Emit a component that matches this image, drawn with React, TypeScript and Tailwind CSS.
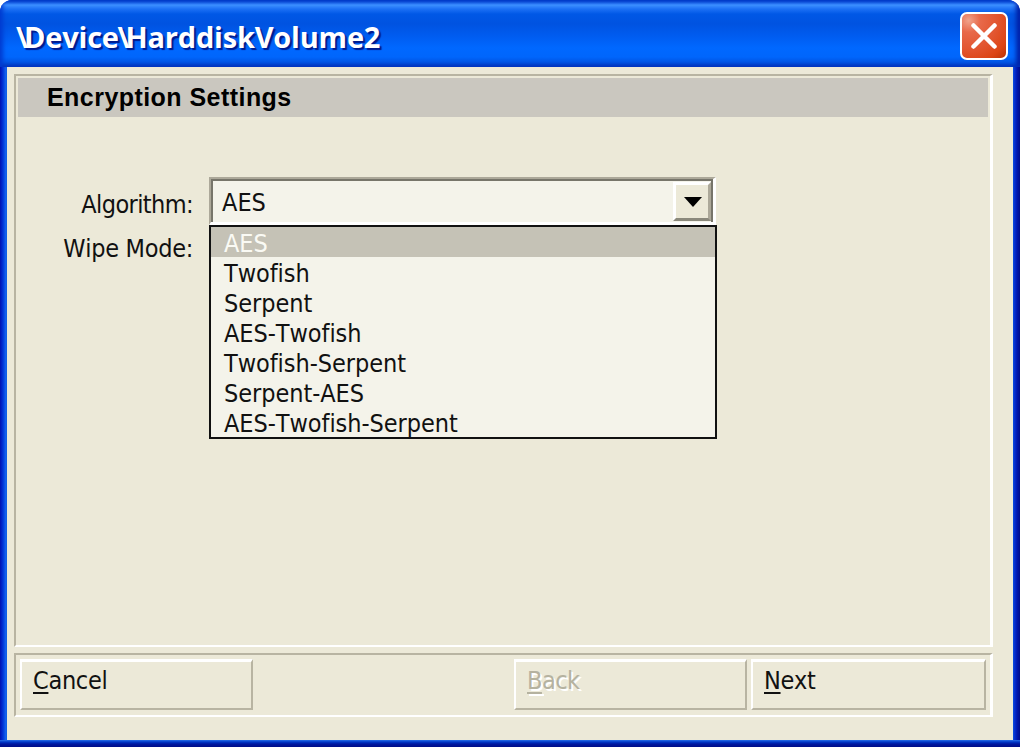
const options = ["AES", "Twofish", "Serpent", "AES-Twofish", "Twofish-Serpent", "Serpent-AES", "AES-Twofish-Serpent"];

function WizardButton({ label, className, disabled }: { label: string; className: string; disabled?: boolean }) {
  return (
    <button
      disabled={disabled}
      className={`h-[51px] border-2 border-t-[3px] border-t-white border-l-white border-r-[#b8b4a2] border-b-[#b8b4a2] pl-[11px] pb-[8px] text-left leading-[30px] ${
        disabled ? "text-[#b5b2a0] tracking-[-0.5px] [text-shadow:2px_2px_0_#fff]" : "text-[#111] tracking-[-0.3px]"
      } ${className}`}
    >
      <span className="underline decoration-2 underline-offset-[3px]">{label[0]}</span>
      {label.slice(1)}
    </button>
  );
}

function ComboBox() {
  return (
    <div className="relative h-[48px] w-[507px] border-t-2 border-l-2 border-r-[3px] border-b-[3px] border-t-[#aca899] border-l-[#aca899] border-r-white border-b-white">
      <div className="flex h-full border-t-2 border-l-2 border-r-2 border-[#77756a] bg-[#f4f3ea]">
        <span className="flex-1 pl-[9px] pt-[4px] leading-[36px]">AES</span>
        <div className="mt-[1px] flex h-[39px] w-[38px] items-center justify-center border-t-[3px] border-l-[3px] border-r-[3px] border-b-[3px] border-t-white border-l-white border-r-[#aca899] border-b-[#8b897c] bg-[#ece9d8]">
          <svg className="mt-[1px] ml-[1px] h-[10px] w-[18px]" viewBox="0 0 18 10">
            <path d="M0 0H18L9 10Z" fill="#000" />
          </svg>
        </div>
      </div>
      <ul className="absolute top-[46px] left-[-2px] z-10 h-[214px] w-[508px] border-2 border-[#111] bg-[#f4f3ea] leading-[34px] tracking-[-0.05px]">
        {options.map((o, i) => (
          <li key={o} className={`h-[30px] pl-[13px] ${i === 0 ? "bg-[#c5c2b6] text-[#fafaf4]" : ""}`}>
            {o}
          </li>
        ))}
      </ul>
    </div>
  );
}

export default function App() {
  return (
    <div className="h-[747px] w-[1020px] overflow-hidden bg-white font-['DejaVu_Sans_Condensed','DejaVu_Sans',sans-serif] text-[25px] text-[#111] [font-kerning:none] [font-stretch:condensed] [font-variant-ligatures:none]">
      <div className="flex h-full flex-col overflow-hidden rounded-t-[12px] bg-[linear-gradient(to_right,#0010b0_0px,#0035d8_3px,#1667f0_6px,#0855dd_7px,#0855dd_1013px,#0838d8_1014px,#0018b0_1017px,#000c88_1020px)]">
        <header className="flex h-[67px] shrink-0 items-center justify-between bg-[linear-gradient(to_bottom,#0050d8_0px,#1560e8_2px,#3c90ff_5px,#1c70f5_9px,#0058e6_14px,#0053e1_24px,#005cf0_36px,#0068ff_48px,#0066fc_57px,#0055e5_62px,#003cc0_67px)] pr-[12px] pl-[16px] shadow-[inset_3px_0_4px_#003bd0,inset_-4px_0_4px_#0022a8]">
          <h1 className="pt-[7px] font-['Open_Sans','Noto_Sans',sans-serif] text-[29px] leading-[40px] font-bold tracking-[-0.2px] text-white [font-stretch:normal] [text-shadow:2px_2px_1px_#001a8c]">
            <span className="tracking-[-4px]">\</span>Devic<span className="tracking-[-1.5px]">e</span>
            <span className="tracking-[-4px]">\</span>HarddiskVolume2
          </h1>
          <button
            aria-label="Close"
            className="mt-[4px] flex h-[48px] w-[48px] items-center justify-center rounded-[7px] border-2 border-white bg-[radial-gradient(circle_at_15%_15%,#f0a38c_0%,#e8694a_22%,#e2552f_55%,#dc4515_80%,#b83408_100%)]"
          >
            <svg className="h-[26px] w-[26px]" viewBox="0 0 26 26">
              <path d="M2.5 2.5L23.5 23.5M23.5 2.5L2.5 23.5" stroke="#fff" strokeWidth="4.5" strokeLinecap="round" />
            </svg>
          </button>
        </header>
        <main className="mx-[7px] mb-[7px] flex flex-1 flex-col bg-[#ece9d8] pt-[7px] pl-[7px]">
          <section className="h-[573px] w-[979px] border-2 border-r-[3px] border-t-[#b8b4a2] border-l-[#b8b4a2] border-r-white border-b-white px-[2px] pt-[2px]">
            <h2 className="h-[39px] bg-[#cac7bf] pl-[29px] font-['Liberation_Sans',Arial,sans-serif] leading-[38px] font-bold tracking-[0.45px] text-black">
              Encryption Settings
            </h2>
            <div className="grid grid-cols-[175px_507px] gap-x-[16px] pt-[60px]">
              <div className="text-right">
                <div className="pt-[13px] leading-[30px] tracking-[-0.6px]">Algorithm:</div>
                <div className="pt-[14px] leading-[30px] tracking-[-0.3px]">Wipe Mode:</div>
              </div>
              <ComboBox />
            </div>
          </section>
          <footer className="mt-[6px] flex h-[64px] w-[979px] border-2 border-r-[3px] border-t-[#b8b4a2] border-l-[#b8b4a2] border-r-white border-b-white pt-[4px] pl-[4px]">
            <WizardButton label="Cancel" className="w-[233px]" />
            <WizardButton label="Back" className="ml-[261px] w-[233px]" disabled />
            <WizardButton label="Next" className="ml-[4px] w-[235px]" />
          </footer>
        </main>
        <div className="-mt-[7px] h-[7px] shrink-0 bg-[linear-gradient(to_bottom,#2a70e8_0px,#0038c8_2px,#0018a0_4px,#000c88_7px)]" />
      </div>
    </div>
  );
}
